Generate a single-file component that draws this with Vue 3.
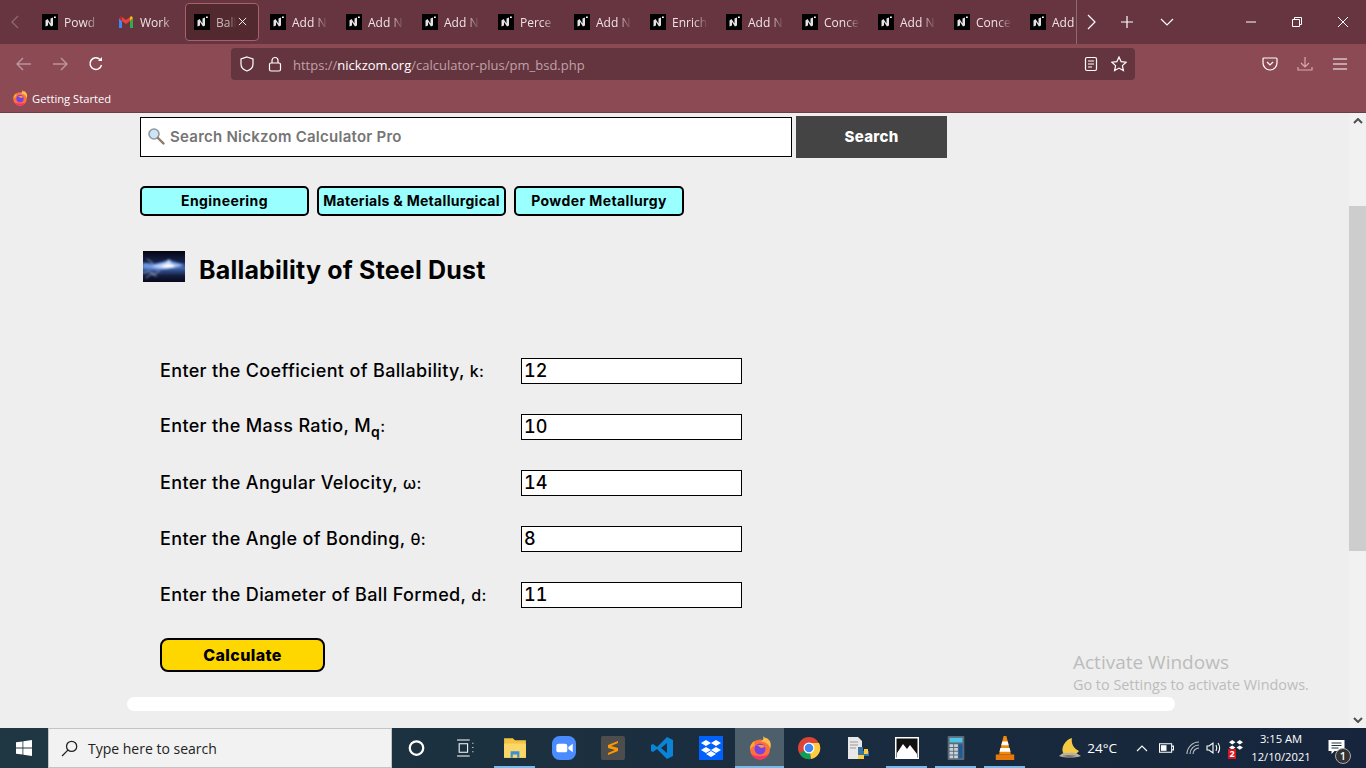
<template>
  <div class="screen">
    <!-- tab strip -->
    <div class="tabbar">
      <svg class="tab-scroll" viewBox="0 0 16 16"><path d="M10 2 4 8l6 6" /></svg>
      <div class="tabs">
        <div v-for="(tab, i) in tabs" :key="i" :class="['tab', { active: tab.active }]">
          <svg v-if="tab.gmail" class="fav" viewBox="0 0 16 16">
            <path d="M1 4v10h3V7z" fill="#4285f4" />
            <path d="M15 4v10h-3V7z" fill="#34a853" />
            <path d="M4 7l4 3 4-3V3L8 6 4 3z" fill="#ea4335" />
            <path d="M1 4l3 3V3L2.500 2z" fill="#c5221f" />
            <path d="M15 4l-3 3V3l1.500-1z" fill="#fbbc04" />
          </svg>
          <svg v-else class="fav" viewBox="0 0 16 16">
            <rect width="16" height="16" fill="#000" />
            <path d="M3.500 6.500l2-1.500 3 4.500V4.500l2.500-1v8l-2 1-3-4.500v3.500l-2.500 1z" fill="#e4e4e4" />
            <path d="M12 2.500h1.800v1.500H12z" fill="#fff" />
          </svg>
          <span class="tab-text">{{ tab.title }}</span>
          <svg v-if="tab.active" class="tab-close" viewBox="0 0 10 10"><path d="M1 1l8 8M9 1l-8 8" /></svg>
        </div>
      </div>
      <div class="tab-actions">
        <svg class="ic16" viewBox="0 0 16 16"><path d="M5 1l7 7-7 7" /></svg>
        <svg class="ic16" viewBox="0 0 16 16"><path d="M8 2v12M2 8h12" /></svg>
        <svg class="ic16" viewBox="0 0 16 16"><path d="M2 5l6 6 6-6" /></svg>
      </div>
      <div class="win-controls">
        <svg viewBox="0 0 12 12"><path d="M1 6h10" /></svg>
        <svg viewBox="0 0 12 12"><path d="M1.500 3.500h7v7h-7zM3.500 3.500v-2h7v7h-2" /></svg>
        <svg viewBox="0 0 12 12"><path d="M1 1l10 10M11 1L1 11" /></svg>
      </div>
    </div>

    <!-- toolbar -->
    <div class="toolbar">
      <svg class="nav dim" viewBox="0 0 16 16"><path d="M15 8H1M7 2L1 8l6 6" /></svg>
      <svg class="nav dim" viewBox="0 0 16 16"><path d="M1 8h14M9 2l6 6-6 6" /></svg>
      <svg class="nav" viewBox="0 0 16 16"><path d="M13.500 9A5.800 5.800 0 1 1 12 3.500" /><path d="M14 1v4h-4z" fill="#fff" stroke="none" /></svg>
      <div class="urlbar">
        <svg class="url-ic shield" viewBox="0 0 16 16"><path d="M8 1l6 2v5c0 3.500-3 6-6 7-3-1-6-3.500-6-7V3z" /></svg>
        <svg class="url-ic" viewBox="0 0 16 16"><rect x="2.500" y="7" width="11" height="8" rx="1.500" /><path d="M5 7V4.500a3 3 0 0 1 6 0V7" /></svg>
        <span class="url"><span class="url-dim">https://</span>nickzom.org<span class="url-dim">/calculator-plus/pm_bsd.php</span></span>
        <svg class="url-ic right" viewBox="0 0 16 16"><rect x="2.500" y="1.500" width="11" height="13" rx="1.500" /><path d="M5 5h6M5 8h6M5 11h4" /></svg>
        <svg class="url-ic star" viewBox="0 0 16 16"><path d="M8 1l2.100 4.600 5 .6-3.700 3.400 1 5L8 12.100 3.600 14.600l1-5L.9 6.200l5-.6z" /></svg>
      </div>
      <div class="tool-right">
        <svg class="url-ic" viewBox="0 0 16 16"><path d="M2 2h12a1 1 0 0 1 1 1v4a7 7 0 0 1-14 0V3a1 1 0 0 1 1-1z" /><path d="M5 6l3 3 3-3" /></svg>
        <svg class="url-ic dl" viewBox="0 0 16 16"><path d="M8 1v10M4 7l4 4 4-4M1 11v3h14v-3" /></svg>
        <svg class="url-ic" viewBox="0 0 16 16"><path d="M1 3h14M1 8h14M1 13h14" /></svg>
      </div>
    </div>

    <!-- bookmarks -->
    <div class="bookmarks">
      <svg class="fox" viewBox="0 0 24 24">
        <circle cx="12" cy="13.500" r="10" fill="#ff7139" />
        <path d="M15 0c1 3 0 5-3 6 5-1 9 2 10 7 2-5 0-10-4-11-1 0-2-1-3-2z" fill="#ffbd4f" />
        <path d="M2 13c0-4 2-7 5-8-1 2-1 3 0 4z" fill="#ffa436" />
        <circle cx="12" cy="13" r="5.500" fill="#7542e5" />
        <path d="M9 9h6l2 2-4 1z" fill="#ff9640" />
        <path d="M3 18c3 6 13 8 18 0-5 3-13 3-18 0z" fill="#ff2d6f" />
      </svg>
      <span>Getting Started</span>
    </div>

    <!-- page -->
    <div class="page">
      <div class="content">
        <div class="search-row">
          <div class="search-box">
            <svg class="lens" viewBox="0 0 18 18">
              <circle cx="7" cy="7" r="5" fill="#cfe3f2" stroke="#8d99a3" stroke-width="1.600" />
              <path d="M11 11l5.500 5.500" stroke="#8c7a66" stroke-width="2.400" stroke-linecap="round" />
            </svg>
            <span>Search Nickzom Calculator Pro</span>
          </div>
          <div class="search-btn">Search</div>
        </div>

        <div class="crumbs">
          <div class="crumb c1">Engineering</div>
          <div class="crumb c2">Materials &amp; Metallurgical</div>
          <div class="crumb c3">Powder Metallurgy</div>
        </div>

        <div class="title-row">
          <svg class="thumb" viewBox="0 0 42 31" preserveAspectRatio="none">
            <defs>
              <linearGradient id="sky" x1="0" y1="0" x2="0" y2="1">
                <stop offset="0" stop-color="#04040f" />
                <stop offset="0.35" stop-color="#16224a" />
                <stop offset="0.55" stop-color="#3d66b0" />
                <stop offset="0.8" stop-color="#141c3c" />
                <stop offset="1" stop-color="#06081a" />
              </linearGradient>
              <filter id="soft" x="-10%" y="-30%" width="120%" height="160%">
                <feGaussianBlur stdDeviation="0.900" />
              </filter>
            </defs>
            <rect width="42" height="31" fill="url(#sky)" />
            <g filter="url(#soft)">
              <path d="M0 12l12 1 14-4 16 5-14 3-14 2-14-2z" fill="#6d95dd" />
              <path d="M8 15l14-3 4-4 3 5 11 2-12 2-8 1z" fill="#bcd2f8" />
              <path d="M18 15l7-2 5 1 2 2-8 1z" fill="#ffffff" />
              <path d="M0 22l6-2 5 3 6-3M3 27l5-4 6 2M4 8l6 4" fill="none" stroke="#9aa8c4" stroke-width="1" />
            </g>
          </svg>
          <h1>Ballability of Steel Dust</h1>
        </div>

        <div class="form">
          <div v-for="row in rows" :key="row.value" class="form-row">
            <div :class="['label', { 'has-sub': row.sub }]">
              {{ row.label }}<template v-if="row.sub"><sub>{{ row.sub }}</sub></template><span class="sym">{{ row.sym }}</span>
            </div>
            <div class="field">{{ row.value }}</div>
          </div>
        </div>

        <div class="calc">Calculate</div>
      </div>
      <div class="white-bar"></div>

      <div class="activate">
        <div class="a1">Activate Windows</div>
        <div class="a2">Go to Settings to activate Windows.</div>
      </div>

      <div class="scrollbar">
        <svg class="arrow" viewBox="0 0 10 6"><path d="M1 5l4-4 4 4" /></svg>
        <div class="track"><div class="thumb-bar"></div></div>
        <svg class="arrow" viewBox="0 0 10 6"><path d="M1 1l4 4 4-4" /></svg>
      </div>
    </div>

    <!-- taskbar -->
    <div class="taskbar">
      <div class="start">
        <svg viewBox="0 0 16 16" fill="#fff"><path d="M0 2.300l6.500-.9v6.200H0zM7.300 1.300L16 0v7.600H7.300zM0 8.400h6.500v6.200L0 13.700zM7.300 8.400H16V16l-8.700-1.200z" /></svg>
      </div>
      <div class="task-search">
        <svg viewBox="0 0 16 16"><circle cx="10" cy="6" r="4.800" /><path d="M6.500 9.500L1 15" /></svg>
        <span>Type here to search</span>
      </div>
      <div class="task-icons">
        <div class="task-ic small"><svg viewBox="0 0 16 16"><circle cx="8" cy="8" r="6" fill="none" stroke="#fff" stroke-width="2" /></svg></div>
        <div class="task-ic small"><svg viewBox="0 0 18 16" fill="none" stroke="#fff"><path d="M1 .500h12M1 15.500h12M3 4h8v8H3zM16 3v1M16 7v1M16 11v1" /></svg></div>
        <div class="task-ic on"><svg viewBox="0 0 22 20"><path d="M1 1h8l2 2h10v16H1z" fill="#f5c242" /><path d="M1 6h20v13H1z" fill="#fbd76a" /><path d="M7 19v-6h8v6h-2v-3H9v3z" fill="#3b8fd6" /></svg></div>
        <div class="task-ic"><svg viewBox="0 0 22 22"><rect width="22" height="22" rx="7" fill="#4a8cff" /><rect x="4" y="7" width="10" height="8" rx="2" fill="#fff" /><path d="M15 10l4-3v8l-4-3z" fill="#fff" /></svg></div>
        <div class="task-ic"><svg viewBox="0 0 24 24"><rect width="24" height="24" rx="2" fill="#4d4d4d" /><path d="M17 5L7 9v3l7 2-7 3v2l10-4v-3l-7-2 7-3z" fill="#ff9800" /></svg></div>
        <div class="task-ic"><svg viewBox="0 0 24 24"><path d="M17 1l6 3v16l-6 3L7 13l-4 3-2-1V9l2-1 4 3zM17 7l-6 5 6 5z" fill="#0a84d6" /></svg></div>
        <div class="task-ic"><svg viewBox="0 0 24 24"><rect width="24" height="24" fill="#0061fe" /><path d="M7 4l5 3-5 3-5-3zM17 4l5 3-5 3-5-3zM7 11l5 3-5 3-5-3zM17 11l5 3-5 3-5-3zM7 18l5-3 5 3-5 3z" fill="#fff" /></svg></div>
        <div class="task-ic fx on"><svg viewBox="0 0 24 24"><circle cx="12" cy="13.500" r="10" fill="#ff7139" /><path d="M15 0c1 3 0 5-3 6 5-1 9 2 10 7 2-5 0-10-4-11-1 0-2-1-3-2z" fill="#ffbd4f" /><path d="M2 13c0-4 2-7 5-8-1 2-1 3 0 4z" fill="#ffa436" /><circle cx="12" cy="13" r="5.500" fill="#7542e5" /><path d="M9 9h6l2 2-4 1z" fill="#ff9640" /><path d="M3 18c3 6 13 8 18 0-5 3-13 3-18 0z" fill="#ff2d6f" /></svg></div>
        <div class="task-ic"><svg viewBox="0 0 24 24"><circle cx="12" cy="12" r="11" fill="#db4437" /><path d="M12 12L2.500 17.500A11 11 0 0 0 14 23z" fill="#0f9d58" /><path d="M12 7h10a11 11 0 0 1-8 16z" fill="#ffcd40" /><circle cx="12" cy="12" r="5.500" fill="#fff" /><circle cx="12" cy="12" r="4.300" fill="#4285f4" /></svg></div>
        <div class="task-ic"><svg viewBox="0 0 24 24"><path d="M2 1h10l4 4v18H2z" fill="#e8e8e8" /><path d="M4 6h8M4 9h8M4 12h6" stroke="#999" /><path d="M12 11h5v4h6v5h-5v3h-6z" fill="#3a75a8" /><path d="M18 13h4v5h-4z" fill="#ffcd40" /><path d="M12 19h6v4h-6z" fill="#ffcd40" /></svg></div>
        <div class="task-ic on"><svg viewBox="0 0 24 22"><rect width="24" height="22" fill="#fff" /><rect x="1.500" y="1.500" width="21" height="19" fill="#111" /><path d="M2 21V16l6-9 4 5 3-4 7 9v4z" fill="#fff" /></svg></div>
        <div class="task-ic on"><svg viewBox="0 0 18 26"><rect width="18" height="26" rx="1" fill="#5c6b77" /><rect x="2" y="2" width="14" height="5" fill="#4fc3e8" /><path d="M2 9h4v3H2zM7 9h4v3H7zM2 13h4v3H2zM7 13h4v3H7zM2 17h4v3H2zM7 17h4v3H7zM2 21h4v3H2zM7 21h4v3H7z" fill="#c8d2d9" /><rect x="12" y="9" width="4" height="15" fill="#1d5c99" /></svg></div>
        <div class="task-ic on"><svg viewBox="0 0 22 26"><path d="M9.500 0h3l5 20h-13z" fill="#f48a0c" /><path d="M8 6h6l1 4H7zM6 13h10l1 4H5z" fill="#fff" /><path d="M1 20h20v6H1z" fill="#e8780a" /></svg></div>
      </div>
      <div class="tray">
        <svg class="weather" viewBox="0 0 24 22"><path d="M14 1c-1 5 1 10 7 13l-3 3H6C2 13 6 3 14 1z" fill="#f6c945" /><path d="M1 19c3-3 6-4 9-3 3-1 8-1 13 3-6 2-16 2-22 0z" fill="#b9b2a3" /><path d="M4 19c4-1 10-1 15 0-4 1-11 1-15 0z" fill="#6b6458" /></svg>
        <span class="temp">24°C</span>
        <svg class="tray-ic up" viewBox="0 0 12 7"><path d="M1 6l5-5 5 5" /></svg>
        <svg class="tray-ic batt" viewBox="0 0 16 10"><path d="M.500.500h13v9H.500zM14 3h1.500v4H14" /><rect x="2" y="2" width="6" height="6" fill="#fff" stroke="none" /></svg>
        <svg class="tray-ic wifi" viewBox="0 0 14 14"><path d="M1 13A12 12 0 0 1 13 1M4 13a9 9 0 0 1 9-9M7 13a6 6 0 0 1 6-6" opacity=".7" /></svg>
        <svg class="tray-ic vol" viewBox="0 0 16 14"><path d="M1 5h2l4-3v10L3 9H1zM10 4c1 2 1 4 0 6M12 2c2 3 2 7 0 10" /></svg>
        <div class="dropbox-tray">
          <svg viewBox="0 0 14 13" fill="#fff"><path d="M3.500 1l3 2-3 2-3-2zM10.500 1l3 2-3 2-3-2zM3.500 6l3 2-3 2-3-2zM10.500 6l3 2-3 2-3-2z" /></svg>
          <span>2</span>
        </div>
        <div class="clock"><div>3:15 AM</div><div>12/10/2021</div></div>
        <div class="notif">
          <svg viewBox="0 0 16 15" fill="#fff"><path d="M0 0h16v11H6l-3 3v-3H0z" /><path d="M3 3h10M3 5.500h10M3 8h7" stroke="#1c3340" /></svg>
          <span>1</span>
        </div>
      </div>
    </div>
  </div>
</template>

<script setup>
const tabs = [
  { title: 'Powd' },
  { title: 'Work', gmail: true },
  { title: 'Ball', active: true },
  { title: 'Add N' },
  { title: 'Add N' },
  { title: 'Add N' },
  { title: 'Perce' },
  { title: 'Add N' },
  { title: 'Enrich' },
  { title: 'Add N' },
  { title: 'Conce' },
  { title: 'Add N' },
  { title: 'Conce' },
  { title: 'Add' }
]

const rows = [
  { label: 'Enter the Coefficient of Ballability, ', sym: 'k:', value: '12' },
  { label: 'Enter the Mass Ratio, M', sub: 'q', sym: ':', value: '10' },
  { label: 'Enter the Angular Velocity, ', sym: 'ω:', value: '14' },
  { label: 'Enter the Angle of Bonding, ', sym: 'θ:', value: '8' },
  { label: 'Enter the Diameter of Ball Formed, ', sym: 'd:', value: '11' }
]
</script>

<style>
html,
body {
  margin: 0;
  overflow: hidden;
}
</style>

<style scoped>
.screen {
  width: 1366px;
  height: 768px;
  display: flex;
  flex-direction: column;
  overflow: hidden;
  font-family: "Open Sans", "Noto Sans", sans-serif;
}

svg {
  display: block;
  flex: none;
}

/* tab strip */
.tabbar {
  height: 44px;
  background: #66353f;
  display: flex;
  align-items: center;
  color: #fff;
}

.tab-scroll {
  width: 16px;
  height: 16px;
  margin: 0 8px;
  fill: none;
  stroke: #8d6a72;
  stroke-width: 1.300;
}

.tabs {
  flex: none;
  width: 1045px;
  height: 44px;
  box-sizing: border-box;
  display: flex;
  align-items: center;
  overflow: hidden;
  border-right: 1px solid #8b6a72;
}

.tab {
  flex: none;
  width: 74px;
  height: 38px;
  margin: 0 1px;
  padding-left: 8px;
  box-sizing: border-box;
  display: flex;
  align-items: center;
  position: relative;
  border: 1px solid transparent;
  border-radius: 4px;
}

.tab.active {
  background: #52292f;
  border-color: #a8606f;
}

.fav {
  width: 16px;
  height: 16px;
}

.tab-text {
  width: 36px;
  margin-left: 6px;
  overflow: hidden;
  white-space: nowrap;
  font-size: 12px;
  color: #efe3e5;
  -webkit-mask-image: linear-gradient(to right, #000 60%, transparent);
  mask-image: linear-gradient(to right, #000 60%, transparent);
}

.tab.active .tab-text {
  width: 20px;
  opacity: 0.75;
}

.tab-close {
  width: 9px;
  height: 9px;
  position: absolute;
  right: 11px;
  top: 13px;
  fill: none;
  stroke: #fff;
  stroke-width: 1;
}

.tab-actions {
  display: flex;
  align-items: center;
  margin-left: 6px;
}

.ic16 {
  width: 16px;
  height: 16px;
  margin-right: 20px;
  fill: none;
  stroke: #fff;
  stroke-width: 1.200;
}

.ic16:nth-child(2) {
  margin-right: 24px;
}

.win-controls {
  margin-left: auto;
  display: flex;
  align-items: center;
  gap: 34px;
  padding-right: 17px;
}

.win-controls svg {
  width: 12px;
  height: 12px;
  fill: none;
  stroke: #fff;
  stroke-width: 1;
}

/* toolbar */
.toolbar {
  height: 44px;
  background: #8c4a55;
  display: flex;
  align-items: center;
  padding: 0 0 4px 16px;
  box-sizing: border-box;
}

.nav {
  width: 16px;
  height: 16px;
  margin-right: 20px;
  fill: none;
  stroke: #fff;
  stroke-width: 1.500;
}

.nav.dim {
  opacity: 0.4;
}

.urlbar {
  width: 904px;
  height: 32px;
  margin-left: 107px;
  background: #65353f;
  border-radius: 4px;
  display: flex;
  align-items: center;
  padding: 0 8px;
  box-sizing: border-box;
  color: #fff;
  font-size: 13px;
}

.url-ic {
  width: 16px;
  height: 16px;
  fill: none;
  stroke: #fff;
  stroke-width: 1.200;
}

.urlbar .url-ic {
  margin-right: 10px;
}

.urlbar .url-ic.shield {
  margin-right: 12px;
}

.urlbar .url-ic.right {
  margin-left: auto;
  margin-right: 12px;
}

.urlbar .url-ic.star {
  margin-right: 0;
}

.url {
  padding-top: 2px;
  white-space: nowrap;
}

.url-dim {
  color: #bfa2a8;
}

.tool-right {
  display: flex;
  align-items: center;
  gap: 19px;
  margin-left: 127px;
}

.url-ic.dl {
  stroke: #dba6af;
}

/* bookmarks */
.bookmarks {
  height: 25px;
  background: #8c4a55;
  border-bottom: 1px solid #6f3b45;
  box-sizing: border-box;
  display: flex;
  align-items: center;
  padding: 0 0 4px 12px;
  gap: 4px;
  color: #fff;
  font-size: 11.200px;
}

.fox {
  width: 16px;
  height: 16px;
}

/* page */
.page {
  height: 615px;
  background: #eeeeee;
  position: relative;
  overflow: hidden;
  font-family: Inter, "Liberation Sans", sans-serif;
  color: #000;
}

.content {
  padding: 3px 0 0 140px;
}

.search-row {
  display: flex;
  gap: 4px;
  align-items: center;
}

.search-box {
  width: 652px;
  height: 40px;
  box-sizing: border-box;
  border: 1px solid #000;
  background: #fff;
  display: flex;
  align-items: center;
  padding: 0 0 2px 6px;
  gap: 5px;
  color: #757575;
  font-size: 15px;
  font-weight: 600;
  letter-spacing: 0.25px;
}

.lens {
  width: 18px;
  height: 18px;
}

.search-btn {
  width: 151px;
  height: 42px;
  box-sizing: border-box;
  padding-bottom: 2px;
  background: #444444;
  color: #fff;
  font-size: 15px;
  font-weight: 800;
  letter-spacing: 0.3px;
  display: flex;
  align-items: center;
  justify-content: center;
}

.crumbs {
  display: flex;
  gap: 8px;
  margin-top: 28px;
}

.crumb {
  height: 30px;
  box-sizing: border-box;
  padding-bottom: 2px;
  border: 2px solid #000;
  border-radius: 5px;
  background: #99ffff;
  display: flex;
  align-items: center;
  justify-content: center;
  font-size: 14px;
  font-weight: 700;
  letter-spacing: 0.4px;
  white-space: nowrap;
}

.c1 { width: 169px; }
.c2 { width: 189px; letter-spacing: 0.3px; }
.c3 { width: 170px; }

.title-row {
  display: flex;
  align-items: center;
  margin-top: 35px;
  padding-left: 3px;
  height: 31px;
}

.thumb {
  width: 42px;
  height: 31px;
}

h1 {
  margin: 0 0 0 14px;
  font-size: 25px;
  font-weight: 700;
  letter-spacing: 0.2px;
  position: relative;
  top: 3px;
}

.form {
  display: flex;
  flex-direction: column;
  gap: 30px;
  margin-top: 76px;
  padding-left: 20px;
}

.form-row {
  height: 26px;
  display: flex;
  align-items: center;
}

.label {
  width: 361px;
  padding-bottom: 2px;
  font-size: 18px;
  font-weight: 500;
  letter-spacing: 0.35px;
  white-space: nowrap;
}

.label.has-sub {
  padding-bottom: 4px;
}

.label sub {
  font-size: 14px;
  font-weight: 600;
  line-height: 0;
}

.sym {
  font-size: 16px;
}

.field {
  width: 221px;
  height: 26px;
  box-sizing: border-box;
  border: 1px solid #000;
  background: #fff;
  padding-left: 2px;
  font-size: 18px;
  font-weight: 500;
  font-variant-numeric: tabular-nums;
  line-height: 24px;
}

.calc {
  width: 165px;
  height: 34px;
  margin: 30px 0 0 20px;
  box-sizing: border-box;
  border: 2px solid #000;
  border-radius: 8px;
  background: #ffd700;
  display: flex;
  align-items: center;
  justify-content: center;
  font-size: 16px;
  font-weight: 800;
  letter-spacing: 0.4px;
}

.white-bar {
  position: absolute;
  left: 127px;
  top: 584px;
  width: 1048px;
  height: 14px;
  background: #fff;
  border-radius: 7px;
}

.activate {
  position: absolute;
  left: 1073px;
  top: 537px;
  font-family: "Open Sans", "Noto Sans", sans-serif;
  color: #bcbcbc;
  white-space: nowrap;
}

.a1 {
  font-size: 19px;
  line-height: 25px;
}

.a2 {
  font-size: 14.400px;
  line-height: 19px;
}

.scrollbar {
  position: absolute;
  right: 0;
  top: 0;
  bottom: 0;
  width: 17px;
  background: #f1f1f1;
  display: flex;
  flex-direction: column;
  align-items: center;
}

.arrow {
  width: 10px;
  height: 6px;
  margin: 5px 0;
  fill: none;
  stroke: #505050;
  stroke-width: 2;
}

.track {
  flex: 1;
  width: 100%;
  padding-top: 77px;
  box-sizing: border-box;
}

.thumb-bar {
  height: 345px;
  background: #cdcdcd;
}

/* taskbar */
.taskbar {
  height: 40px;
  background: linear-gradient(to right, #1f3742, #16253c);
  display: flex;
  align-items: stretch;
  color: #fff;
}

.start {
  width: 48px;
  display: flex;
  align-items: center;
  justify-content: center;
}

.start svg {
  width: 16px;
  height: 16px;
}

.task-search {
  width: 344px;
  box-sizing: border-box;
  background: #f2f2f2;
  border: 1px solid #c4c4c4;
  display: flex;
  align-items: center;
  padding-left: 12px;
  gap: 10px;
  color: #222;
  font-size: 14px;
}

.task-search svg {
  width: 17px;
  height: 17px;
  fill: none;
  stroke: #222;
  stroke-width: 1.200;
}

.task-icons {
  display: flex;
}

.task-ic {
  width: 49px;
  display: flex;
  align-items: center;
  justify-content: center;
  box-sizing: border-box;
  position: relative;
}

.task-ic svg {
  width: 24px;
  height: 24px;
}

.task-ic.small svg {
  width: 19px;
  height: 18px;
}

.task-ic.on::after {
  content: "";
  position: absolute;
  left: 4px;
  right: 4px;
  bottom: 0;
  height: 2px;
  background: #76b9ed;
}

.task-ic.fx {
  background: #4d5f6b;
}

.task-ic.fx::after {
  left: 0;
  right: 0;
}

.tray {
  margin-left: auto;
  display: flex;
  align-items: center;
  font-size: 13.500px;
  padding-right: 15px;
}

.weather {
  width: 24px;
  height: 22px;
}

.temp {
  margin-left: 5px;
}

.tray-ic {
  fill: none;
  stroke: #fff;
  stroke-width: 1.100;
}

.up {
  width: 12px;
  height: 7px;
  margin-left: 19px;
}

.batt {
  width: 15px;
  height: 10px;
  margin-left: 11px;
}

.wifi {
  width: 14px;
  height: 14px;
  margin-left: 12px;
}

.vol {
  width: 16px;
  height: 14px;
  margin-left: 6px;
}

.dropbox-tray {
  width: 16px;
  height: 18px;
  margin-left: 6px;
  position: relative;
}

.dropbox-tray svg {
  width: 16px;
  height: 14px;
}

.dropbox-tray span {
  position: absolute;
  left: 0;
  bottom: -2px;
  width: 8px;
  height: 10px;
  background: #d8141e;
  font-size: 9px;
  font-weight: 700;
  line-height: 10px;
  text-align: center;
}

.clock {
  width: 68px;
  margin-left: 3px;
  text-align: center;
  font-size: 11.200px;
  line-height: 18px;
}

.notif {
  width: 23px;
  height: 27px;
  margin-left: 13px;
  align-self: flex-start;
  margin-top: 12px;
  position: relative;
}

.notif svg {
  width: 17px;
  height: 15px;
}

.notif span {
  position: absolute;
  left: 7px;
  top: 8px;
  width: 16px;
  height: 16px;
  border-radius: 50%;
  background: #333;
  border: 1px solid #aaa;
  box-sizing: border-box;
  font-size: 11px;
  font-weight: 600;
  line-height: 14px;
  text-align: center;
}
</style>
